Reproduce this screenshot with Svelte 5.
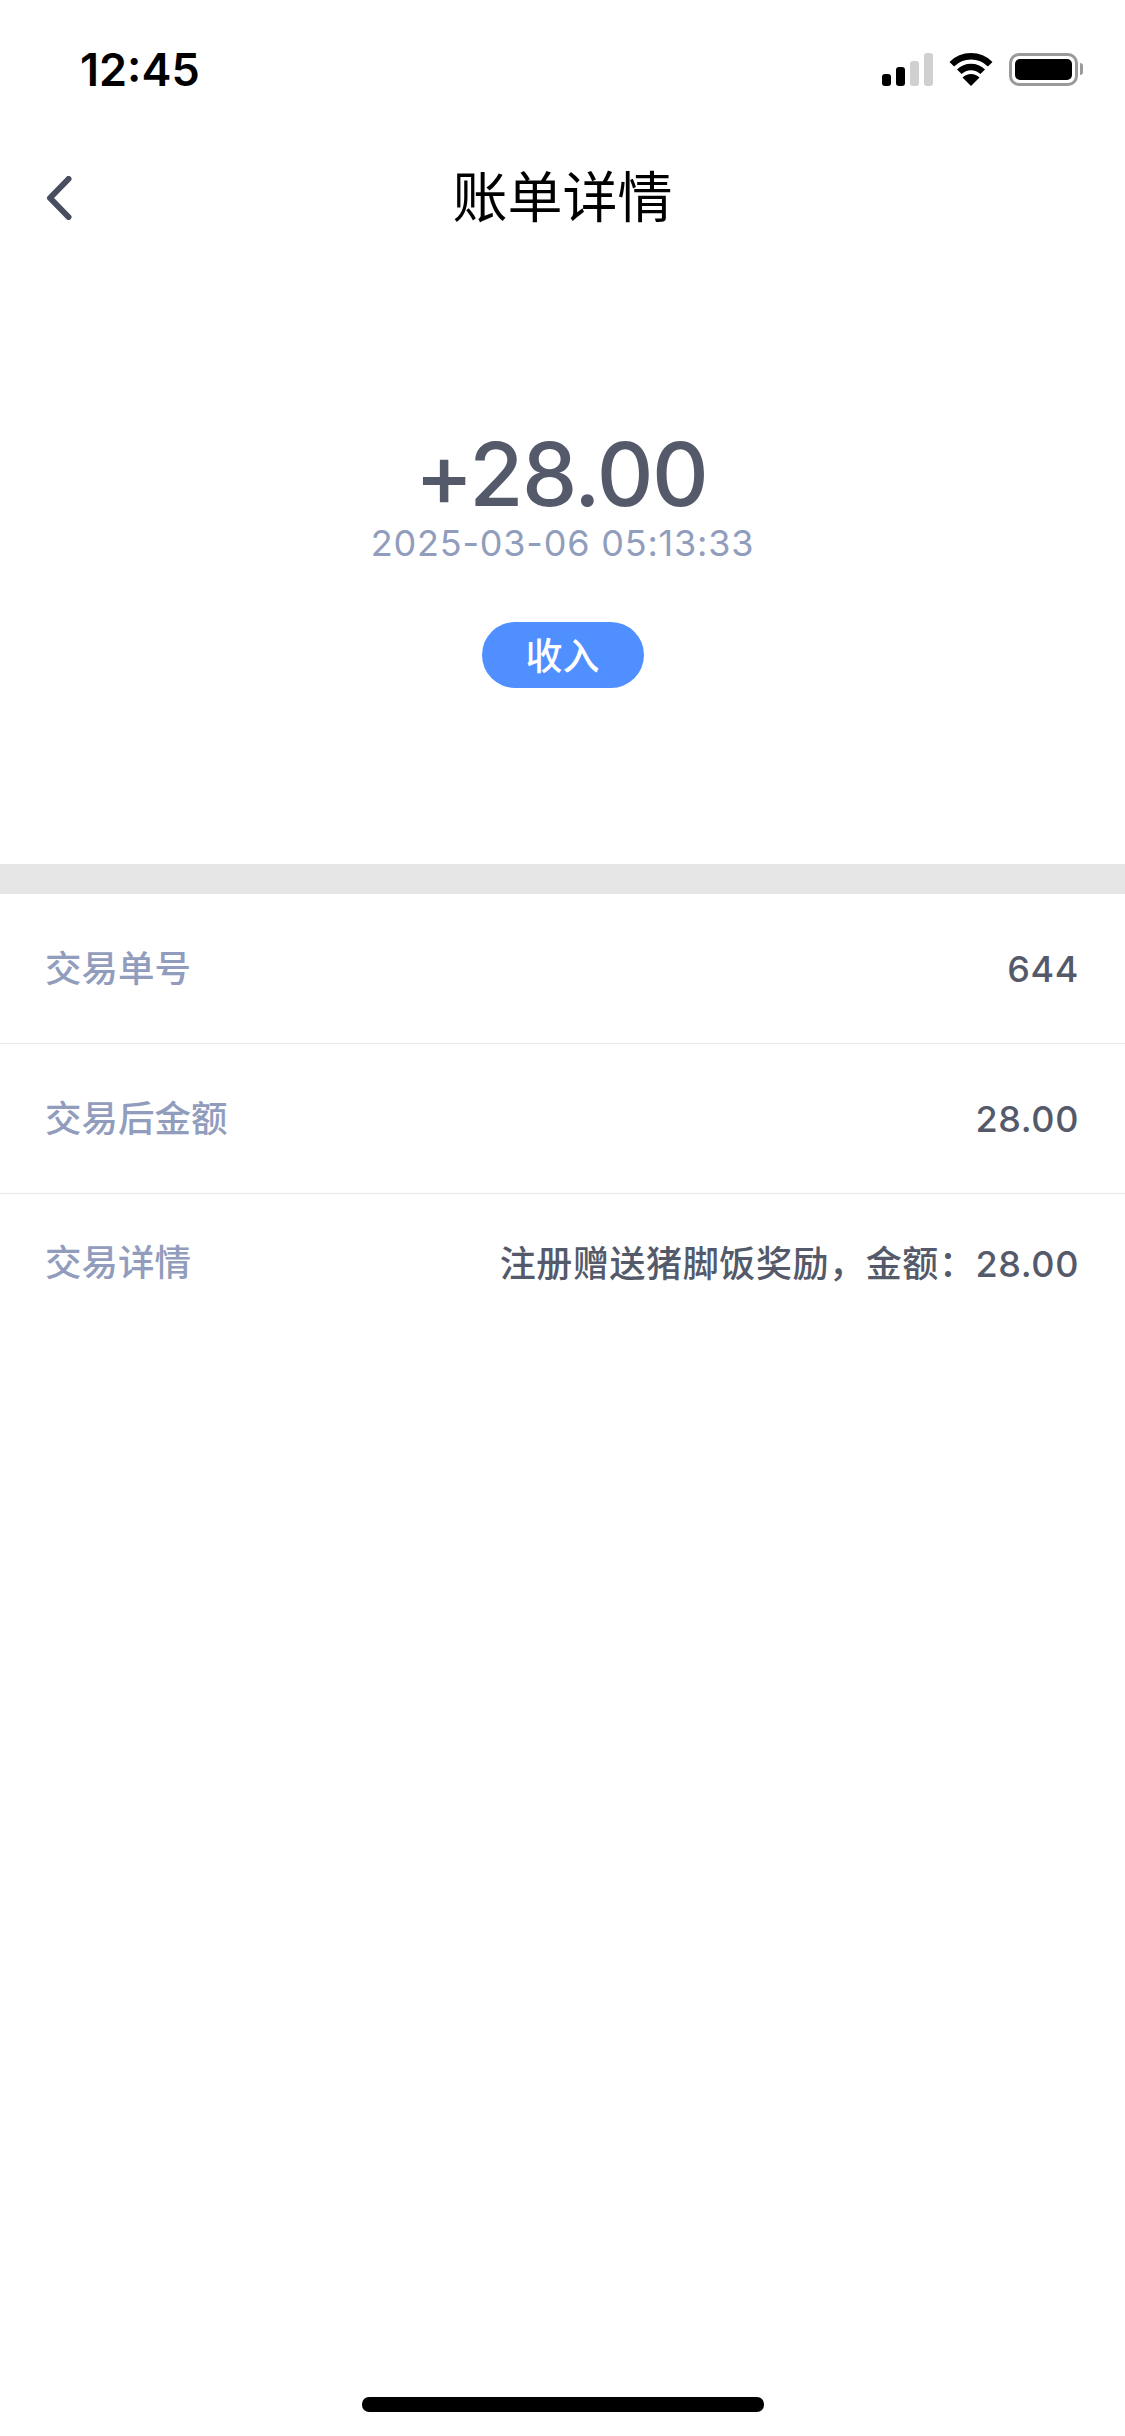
<script lang="ts">
	const rows = [
		{ label: '交易单号', value: '644' },
		{ label: '交易后金额', value: '28.00' },
		{ label: '交易详情', value: '注册赠送猪脚饭奖励，金额：28.00' }
	];
</script>

<div class="page">
	<header class="status">
		<span class="time">12:45</span>
		<div class="status-icons">
			<div class="signal">
				<i class="bar on b1"></i>
				<i class="bar on b2"></i>
				<i class="bar b3"></i>
				<i class="bar b4"></i>
			</div>
			<svg class="wifi" width="46" height="33" viewBox="0 0 46 33">
				<path d="M3.8 11.2A27.2 27.2 0 0 1 42.2 11.2" fill="none" stroke="#000" stroke-width="6.5" />
				<path d="M11.3 18.8A16.5 16.5 0 0 1 34.7 18.8" fill="none" stroke="#000" stroke-width="6.5" />
				<path d="M23 33L14.5 24.5A12 12 0 0 1 31.5 24.5Z" fill="#000" />
			</svg>
			<div class="battery">
				<div class="battery-body"><div class="battery-level"></div></div>
				<div class="battery-cap"></div>
			</div>
		</div>
	</header>

	<nav class="nav">
		<svg class="back" width="26" height="44" viewBox="0 0 26 44">
			<path d="M22.5 3L4 22L22.5 41" fill="none" stroke="#484e60" stroke-width="6" stroke-linecap="round" stroke-linejoin="round" />
		</svg>
		<h1>账单详情</h1>
	</nav>

	<section class="hero">
		<div class="amount">+28.00</div>
		<div class="date">2025-03-06 05:13:33</div>
		<div class="tag">收入</div>
	</section>

	<div class="gap"></div>

	<ul class="rows">
		{#each rows as row}
			<li>
				<span class="label">{row.label}</span>
				<span class="value">{row.value}</span>
			</li>
		{/each}
	</ul>

	<div class="home-bar"></div>
</div>

<style>
	:global(body) {
		margin: 0;
		background: #fff;
	}

	.page {
		display: flex;
		flex-direction: column;
		width: 1125px;
		height: 2436px;
		overflow: hidden;
		background: #fff;
		font-family: Inter, 'Noto Sans CJK SC', sans-serif;
	}

	/* Status bar */
	.status {
		display: flex;
		align-items: center;
		justify-content: space-between;
		height: 138px;
		padding: 0 42px 0 80px;
		box-sizing: border-box;
		flex: none;
	}

	.time {
		font-size: 45px;
		font-weight: 600;
		color: #000;
		line-height: 1;
	}

	.status-icons {
		display: flex;
		align-items: center;
		gap: 15px;
	}

	.signal {
		display: flex;
		align-items: flex-end;
		gap: 5px;
		height: 33px;
	}

	.bar {
		display: block;
		width: 9px;
		border-radius: 3px;
		background: #d0d0d0;
	}

	.bar.on {
		background: #000;
	}

	.b1 {
		height: 12px;
	}

	.b2 {
		height: 19px;
	}

	.b3 {
		height: 25px;
	}

	.b4 {
		height: 33px;
	}

	.battery {
		display: flex;
		align-items: center;
		gap: 2px;
	}

	.battery-body {
		width: 69px;
		height: 33px;
		box-sizing: border-box;
		border: 3px solid #9a9a9a;
		border-radius: 10px;
		padding: 3px;
	}

	.battery-level {
		width: 100%;
		height: 100%;
		background: #000;
		border-radius: 5px;
	}

	.battery-cap {
		width: 3px;
		height: 12px;
		background: #9a9a9a;
		border-radius: 0 3px 3px 0;
	}

	/* Title bar */
	.nav {
		position: relative;
		display: flex;
		align-items: center;
		justify-content: center;
		height: 118px;
		flex: none;
	}

	.back {
		position: absolute;
		left: 46px;
		top: 38px;
	}

	h1 {
		margin: 0;
		font-size: 55px;
		font-weight: 400;
		color: #000;
		line-height: 1;
	}

	/* Amount block */
	.hero {
		display: flex;
		flex-direction: column;
		align-items: center;
		height: 608px;
		box-sizing: border-box;
		padding-top: 174px;
		flex: none;
	}

	.amount {
		padding-right: 3px;
		font-size: 88px;
		line-height: 88px;
		font-weight: 500;
		color: #545a6a;
		letter-spacing: -1.5px;
	}

	.date {
		margin-top: 3px;
		font-size: 36px;
		line-height: 44px;
		color: #919dbd;
		letter-spacing: 0.8px;
	}

	.tag {
		display: flex;
		align-items: center;
		justify-content: center;
		margin-top: 57px;
		width: 162px;
		height: 66px;
		padding-bottom: 3px;
		box-sizing: border-box;
		border-radius: 33px;
		background: #4f8fff;
		color: #fff;
		font-size: 37px;
		font-weight: 500;
	}

	.gap {
		height: 30px;
		background: #e6e6e6;
		flex: none;
	}

	/* Detail rows */
	.rows {
		list-style: none;
		margin: 0;
		padding: 0;
	}

	.rows li {
		display: flex;
		align-items: center;
		justify-content: space-between;
		height: 150px;
		padding: 0 46px 0 45px;
		box-sizing: border-box;
		border-bottom: 1px solid #e8e8e8;
		font-size: 36px;
	}

	.rows li:last-child {
		border-bottom: none;
		height: 133px;
	}

	.label {
		margin-bottom: 4px;
		color: #929dbd;
		font-size: 36.5px;
		font-weight: 500;
	}

	.rows li:last-child .label {
		margin-bottom: 0;
	}

	.value {
		color: #545a6a;
		font-weight: 450;
		letter-spacing: 0.6px;
	}

	.home-bar {
		width: 402px;
		height: 15px;
		margin: auto auto 24px;
		border-radius: 7px;
		background: #000;
		flex: none;
	}
</style>
